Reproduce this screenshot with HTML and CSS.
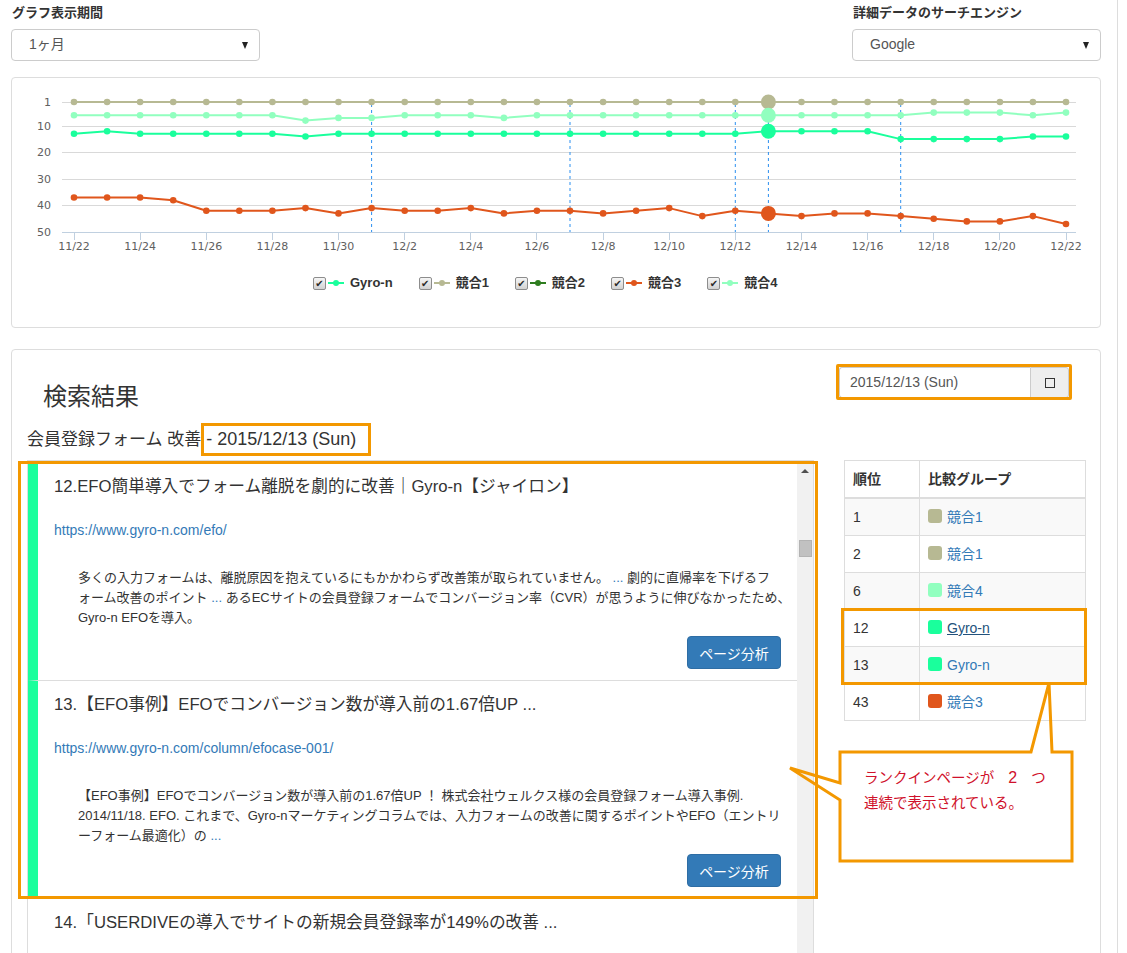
FILE: index.html
```html
<!DOCTYPE html>
<html lang="ja">
<head>
<meta charset="utf-8">
<title>検索結果</title>
<link rel="stylesheet" href="styles.css">
</head>
<body>
<div class="page">
  <div class="filters">
    <div class="field">
      <div class="field-label">グラフ表示期間</div>
      <div class="select"><span>1ヶ月</span><i class="caret"></i></div>
    </div>
    <div class="field">
      <div class="field-label">詳細データのサーチエンジン</div>
      <div class="select"><span>Google</span><i class="caret"></i></div>
    </div>
  </div>

  <section class="panel chart-panel">
    <svg class="chart" width="1088" height="187" viewBox="12 78 1088 187">
      <defs>
        <marker id="dot-gyro" viewBox="0 0 8 8" refX="4" refY="4" markerWidth="8" markerHeight="8" markerUnits="userSpaceOnUse"><circle cx="4" cy="4" r="3.3" class="f-gyro"/></marker>
        <marker id="dot-k1" viewBox="0 0 8 8" refX="4" refY="4" markerWidth="8" markerHeight="8" markerUnits="userSpaceOnUse"><circle cx="4" cy="4" r="3.3" class="f-k1"/></marker>
        <marker id="dot-k3" viewBox="0 0 8 8" refX="4" refY="4" markerWidth="8" markerHeight="8" markerUnits="userSpaceOnUse"><circle cx="4" cy="4" r="3.3" class="f-k3"/></marker>
        <marker id="dot-k4" viewBox="0 0 8 8" refX="4" refY="4" markerWidth="8" markerHeight="8" markerUnits="userSpaceOnUse"><circle cx="4" cy="4" r="3.3" class="f-k4"/></marker>
      </defs>
      <g class="grid">
        <line x1="62" x2="1076" y1="102.5" y2="102.5"/>
        <line x1="62" x2="1076" y1="126.5" y2="126.5"/>
        <line x1="62" x2="1076" y1="152.5" y2="152.5"/>
        <line x1="62" x2="1076" y1="179.5" y2="179.5"/>
        <line x1="62" x2="1076" y1="205.5" y2="205.5"/>
      </g>
      <line class="axis" x1="62" x2="1076" y1="232.5" y2="232.5"/>
      <g class="axis">
        <line x1="74.5" x2="74.5" y1="232" y2="240"/>
        <line x1="140.5" x2="140.5" y1="232" y2="240"/>
        <line x1="206.5" x2="206.5" y1="232" y2="240"/>
        <line x1="272.5" x2="272.5" y1="232" y2="240"/>
        <line x1="338.5" x2="338.5" y1="232" y2="240"/>
        <line x1="404.5" x2="404.5" y1="232" y2="240"/>
        <line x1="470.5" x2="470.5" y1="232" y2="240"/>
        <line x1="536.5" x2="536.5" y1="232" y2="240"/>
        <line x1="603.5" x2="603.5" y1="232" y2="240"/>
        <line x1="669.5" x2="669.5" y1="232" y2="240"/>
        <line x1="735.5" x2="735.5" y1="232" y2="240"/>
        <line x1="801.5" x2="801.5" y1="232" y2="240"/>
        <line x1="867.5" x2="867.5" y1="232" y2="240"/>
        <line x1="933.5" x2="933.5" y1="232" y2="240"/>
        <line x1="999.5" x2="999.5" y1="232" y2="240"/>
        <line x1="1066.5" x2="1066.5" y1="232" y2="240"/>
      </g>
      <g class="ylabels">
        <text x="51" y="106">1</text>
        <text x="51" y="130">10</text>
        <text x="51" y="156">20</text>
        <text x="51" y="183">30</text>
        <text x="51" y="209">40</text>
        <text x="51" y="236">50</text>
      </g>
      <g class="xlabels">
        <text x="74" y="250">11/22</text>
        <text x="140.1" y="250">11/24</text>
        <text x="206.3" y="250">11/26</text>
        <text x="272.4" y="250">11/28</text>
        <text x="338.5" y="250">11/30</text>
        <text x="404.7" y="250">12/2</text>
        <text x="470.8" y="250">12/4</text>
        <text x="536.9" y="250">12/6</text>
        <text x="603.1" y="250">12/8</text>
        <text x="669.2" y="250">12/10</text>
        <text x="735.3" y="250">12/12</text>
        <text x="801.5" y="250">12/14</text>
        <text x="867.6" y="250">12/16</text>
        <text x="933.7" y="250">12/18</text>
        <text x="999.9" y="250">12/20</text>
        <text x="1066" y="250">12/22</text>
      </g>
      <g class="plotline">
        <line x1="371.6" x2="371.6" y1="104" y2="232"/>
        <line x1="570" x2="570" y1="104" y2="232"/>
        <line x1="735.3" x2="735.3" y1="104" y2="232"/>
        <line x1="768.4" x2="768.4" y1="104" y2="232"/>
        <line x1="900.7" x2="900.7" y1="104" y2="232"/>
      </g>
      <polyline class="series s-k1" points="74,102 107.1,102 140.1,102 173.2,102 206.3,102 239.3,102 272.4,102 305.5,102 338.5,102 371.6,102 404.7,102 437.7,102 470.8,102 503.9,102 536.9,102 570,102 603.1,102 636.1,102 669.2,102 702.3,102 735.3,102 768.4,102 801.5,102 834.5,102 867.6,102 900.7,102 933.7,102 966.8,102 999.9,102 1032.9,102 1066,102"/>
      <polyline class="series s-k4" points="74,115.3 107.1,115.3 140.1,115.3 173.2,115.3 206.3,115.3 239.3,115.3 272.4,115.3 305.5,120.6 338.5,117.9 371.6,117.9 404.7,115.3 437.7,115.3 470.8,115.3 503.9,117.9 536.9,115.3 570,115.3 603.1,115.3 636.1,115.3 669.2,115.3 702.3,115.3 735.3,115.3 768.4,115.3 801.5,115.3 834.5,115.3 867.6,115.3 900.7,115.3 933.7,112.6 966.8,112.6 999.9,112.6 1032.9,115.3 1066,112.6"/>
      <polyline class="series s-gyro" points="74,133.8 107.1,131.2 140.1,133.8 173.2,133.8 206.3,133.8 239.3,133.8 272.4,133.8 305.5,136.5 338.5,133.8 371.6,133.8 404.7,133.8 437.7,133.8 470.8,133.8 503.9,133.8 536.9,133.8 570,133.8 603.1,133.8 636.1,133.8 669.2,133.8 702.3,133.8 735.3,133.8 768.4,131.2 801.5,131.2 834.5,131.2 867.6,131.2 900.7,139.1 933.7,139.1 966.8,139.1 999.9,139.1 1032.9,136.5 1066,136.5"/>
      <polyline class="series s-k3" points="74,197.5 107.1,197.5 140.1,197.5 173.2,200.2 206.3,210.8 239.3,210.8 272.4,210.8 305.5,208.1 338.5,213.4 371.6,208.1 404.7,210.8 437.7,210.8 470.8,208.1 503.9,213.4 536.9,210.8 570,210.8 603.1,213.4 636.1,210.8 669.2,208.1 702.3,216.1 735.3,210.8 768.4,213.4 801.5,216.1 834.5,213.4 867.6,213.4 900.7,216.1 933.7,218.7 966.8,221.4 999.9,221.4 1032.9,216.1 1066,224"/>
      <circle class="f-k1" cx="768.4" cy="102" r="7.5"/>
      <circle class="f-k4" cx="768.4" cy="115.3" r="7.5"/>
      <circle class="f-gyro" cx="768.4" cy="131.2" r="7.5"/>
      <circle class="f-k3" cx="768.4" cy="213.4" r="7.5"/>
    </svg>
    <div class="legend">
      <span class="legend-item"><span class="cb">✔</span><svg class="lg-mark" width="16" height="8" viewBox="0 0 16 8"><line class="s-gyro-l" x1="0" y1="4" x2="16" y2="4"/><circle class="f-gyro" cx="8" cy="4" r="3"/></svg><span class="lg-text">Gyro-n</span></span>
      <span class="legend-item"><span class="cb">✔</span><svg class="lg-mark" width="16" height="8" viewBox="0 0 16 8"><line class="s-k1-l" x1="0" y1="4" x2="16" y2="4"/><circle class="f-k1" cx="8" cy="4" r="3"/></svg><span class="lg-text">競合1</span></span>
      <span class="legend-item"><span class="cb">✔</span><svg class="lg-mark" width="16" height="8" viewBox="0 0 16 8"><line class="s-k2-l" x1="0" y1="4" x2="16" y2="4"/><circle class="f-k2" cx="8" cy="4" r="3"/></svg><span class="lg-text">競合2</span></span>
      <span class="legend-item"><span class="cb">✔</span><svg class="lg-mark" width="16" height="8" viewBox="0 0 16 8"><line class="s-k3-l" x1="0" y1="4" x2="16" y2="4"/><circle class="f-k3" cx="8" cy="4" r="3"/></svg><span class="lg-text">競合3</span></span>
      <span class="legend-item"><span class="cb">✔</span><svg class="lg-mark" width="16" height="8" viewBox="0 0 16 8"><line class="s-k4-l" x1="0" y1="4" x2="16" y2="4"/><circle class="f-k4" cx="8" cy="4" r="3"/></svg><span class="lg-text">競合4</span></span>
    </div>
  </section>

  <section class="panel results-panel">
    <div class="results-main">
      <h3 class="results-title">検索結果</h3>
      <p class="query">会員登録フォーム 改善<span class="query-date">- 2015/12/13 (Sun)</span></p>
      <div class="result-list">
        <div class="result-items">
          <div class="result own">
            <h4 class="result-title">12.EFO簡単導入でフォーム離脱を劇的に改善<span class="bar">｜</span>Gyro-n【ジャイロン】</h4>
            <a class="result-url">https://www.gyro-n.com/efo/</a>
            <p class="result-desc">多くの入力フォームは、離脱原因を抱えているにもかかわらず改善策が取られていません。 <span class="more">...</span> 劇的に直帰率を下げるフ<br>ォーム改善のポイント <span class="more">...</span> あるECサイトの会員登録フォームでコンバージョン率（CVR）が思うように伸びなかったため、<br>Gyro-n EFOを導入。</p>
            <div class="result-actions"><button class="btn">ページ分析</button></div>
          </div>
          <div class="result own">
            <h4 class="result-title">13.【EFO事例】EFOでコンバージョン数が導入前の1.67倍UP ...</h4>
            <a class="result-url">https://www.gyro-n.com/column/efocase-001/</a>
            <p class="result-desc">【EFO事例】EFOでコンバージョン数が導入前の1.67倍UP ！ 株式会社ウェルクス様の会員登録フォーム導入事例.<br>2014/11/18. EFO. これまで、Gyro-nマーケティングコラムでは、入力フォームの改善に関するポイントやEFO（エントリ<br>ーフォーム最適化）の <span class="more">...</span></p>
            <div class="result-actions"><button class="btn">ページ分析</button></div>
          </div>
          <div class="result rest">
            <h4 class="result-title">14.「USERDIVEの導入でサイトの新規会員登録率が149%の改善 ...</h4>
          </div>
        </div>
        <div class="fake-scroll"><i class="arrow-up"></i><i class="thumb"></i></div>
      </div>
    </div>
    <aside class="results-side">
      <div class="date-group"><span class="date-input">2015/12/13 (Sun)</span><span class="date-btn"><i class="cal-box"></i></span></div>
      <table class="rank-table">
        <thead><tr><th class="c-rank">順位</th><th>比較グループ</th></tr></thead>
        <tbody>
          <tr><td>1</td><td><span class="sw sw-k1"></span><a class="grp">競合1</a></td></tr>
          <tr><td>2</td><td><span class="sw sw-k1"></span><a class="grp">競合1</a></td></tr>
          <tr><td>6</td><td><span class="sw sw-k4"></span><a class="grp">競合4</a></td></tr>
          <tr><td>12</td><td><span class="sw sw-gyro"></span><a class="grp hover">Gyro-n</a></td></tr>
          <tr><td>13</td><td><span class="sw sw-gyro"></span><a class="grp">Gyro-n</a></td></tr>
          <tr><td>43</td><td><span class="sw sw-k3"></span><a class="grp">競合3</a></td></tr>
        </tbody>
      </table>
    </aside>
  </section>

  <div class="annot annot-date"></div>
  <div class="annot annot-list"></div>
  <div class="annot annot-rows"></div>
  <div class="callout">
    <svg class="callout-shape" width="300" height="195" viewBox="780 675 300 195"><path d="M1049,683 L1031,752 H840 V783 L790,768 L840,800 V861 H1072 V752 H1052 Z"/></svg>
    <p class="callout-text">ランクインページが<span class="num">2</span>つ<br>連続で表示されている。</p>
  </div>
</div>
</body>
</html>
```
FILE: styles.css
```css
* { box-sizing: border-box; }
html, body { margin: 0; height: 953px; overflow: hidden; background: #fff; }
body {
  font-family: "Liberation Sans", "Noto Sans CJK JP", sans-serif;
  font-size: 14px;
  line-height: 1.42857;
  color: #333;
}
.page {
  position: relative;
  width: 1118px;
  min-height: 953px;
  padding: 4px 16px 0 11px;
  border-right: 1px solid #ddd;
}

/* filters */
.filters { display: flex; justify-content: space-between; }
.field { width: 249px; }
.field-label { font-size: 13px; font-weight: bold; line-height: 18px; margin: 0 0 7px 1px; color: #333; }
.select {
  height: 32px;
  border: 1px solid #ccc;
  border-radius: 4px;
  display: flex;
  align-items: center;
  justify-content: space-between;
  padding: 0 11px 0 17px;
  font-size: 14px;
  color: #555;
}
.caret {
  width: 0; height: 0;
  border-left: 3.5px solid transparent;
  border-right: 3.5px solid transparent;
  border-top: 7px solid #222;
}

/* panels */
.panel { border: 1px solid #ddd; border-radius: 4px; background: #fff; }
.chart-panel { margin-top: 16px; height: 251px; }
.chart { display: block; }
.grid line { stroke: #d9d9d9; stroke-width: 1; }
.axis, .axis line { stroke: #c0d0e0; stroke-width: 1; }
.ylabels text { font-family: "DejaVu Sans", sans-serif; font-size: 11px; fill: #606060; text-anchor: end; }
.xlabels text { font-family: "DejaVu Sans", sans-serif; font-size: 11px; fill: #606060; text-anchor: middle; }
.plotline line { stroke: #2b8ff0; stroke-width: 1; stroke-dasharray: 3 3; }
.series { fill: none; stroke-width: 2; stroke-linejoin: round; }
.s-gyro { stroke: #1aff9c; marker-start: url(#dot-gyro); marker-mid: url(#dot-gyro); marker-end: url(#dot-gyro); }
.s-k1 { stroke: #b7b993; marker-start: url(#dot-k1); marker-mid: url(#dot-k1); marker-end: url(#dot-k1); }
.s-k3 { stroke: #e0561c; marker-start: url(#dot-k3); marker-mid: url(#dot-k3); marker-end: url(#dot-k3); }
.s-k4 { stroke: #91ffbf; marker-start: url(#dot-k4); marker-mid: url(#dot-k4); marker-end: url(#dot-k4); }
.f-gyro { fill: #1aff9c; }
.f-k1 { fill: #b7b993; }
.f-k2 { fill: #2e7d1f; }
.f-k3 { fill: #e0561c; }
.f-k4 { fill: #91ffbf; }
.s-gyro-l { stroke: #1aff9c; stroke-width: 2; }
.s-k1-l { stroke: #b7b993; stroke-width: 2; }
.s-k2-l { stroke: #2e7d1f; stroke-width: 2; }
.s-k3-l { stroke: #e0561c; stroke-width: 2; }
.s-k4-l { stroke: #91ffbf; stroke-width: 2; }

.legend { display: flex; align-items: center; height: 16px; margin-top: 10px; padding-left: 301px; }
.legend-item { display: flex; align-items: center; margin-right: 26px; }
.cb {
  width: 13px; height: 13px;
  border: 1px solid #8d8d8d;
  border-radius: 2px;
  background: linear-gradient(#f6f6f6, #d2d2d2);
  font-family: "DejaVu Sans", sans-serif;
  font-size: 10px;
  line-height: 11px;
  text-align: center;
  color: #2a2a2a;
  margin-right: 2px;
}
.lg-mark { display: block; margin-right: 6px; }
.lg-text { font-size: 13px; font-weight: bold; color: #333; line-height: 16px; }

/* results */
.results-panel {
  margin-top: 21px;
  height: 700px;
  display: grid;
  grid-template-columns: 787px 250px;
  column-gap: 22px;
  align-items: start;
  padding: 0 14px 0 15px;
}
.results-title { margin: 32px 0 0 16px; font-size: 24px; line-height: 30px; font-weight: normal; color: #333; }
.query { margin: 11px 0 0; font-size: 17px; line-height: 33px; height: 33px; white-space: nowrap; }
.query-date {
  display: inline-block;
  vertical-align: top;
  border: 3px solid #f39800;
  padding: 0 12px 0 2px;
  line-height: 27px;
  font-size: 18px;
}
.result-list {
  margin-top: 4px;
  height: 520px;
  border: 1px solid #ddd;
  display: flex;
  overflow: hidden;
}
.result-items { flex: 1; min-width: 0; }
.result {
  border-left: 10px solid transparent;
  border-bottom: 1px solid #ddd;
  padding: 13px 16px 11px 16px;
}
.result.own { border-left-color: #1aff9c; }
.result.rest { min-height: 160px; }
.result-title { margin: 0; font-size: 16.7px; line-height: 22px; font-weight: normal; color: #333; white-space: nowrap; }
.bar { font-family: "Noto Sans CJK JP", sans-serif; color: #333; font-weight: bold; }
.result-url { display: block; margin-top: 22px; font-size: 14px; line-height: 20px; color: #337ab7; text-decoration: none; }
.result-desc { margin: 28px 0 0; padding-left: 24px; font-size: 13px; line-height: 20px; white-space: nowrap; color: #333; }
.more { color: #337ab7; }
.result-actions { margin-top: 8px; display: flex; justify-content: flex-end; }
.btn {
  width: 94px; height: 33px;
  background: #337ab7;
  border: 1px solid #2e6da4;
  border-radius: 4px;
  color: #fff;
  font-family: inherit;
  font-size: 14px;
  padding: 0;
}
.fake-scroll {
  width: 16px;
  background: #f1f1f1;
  display: flex;
  flex-direction: column;
  align-items: center;
}
.arrow-up {
  margin-top: 8px;
  width: 0; height: 0;
  border-left: 4px solid transparent;
  border-right: 4px solid transparent;
  border-bottom: 4px solid #505050;
}
.thumb {
  margin-top: 67px;
  width: 13px; height: 17px;
  background: #c1c1c1;
  border: 1px solid #b3b3b3;
}

.results-side { display: block; }
.date-group { margin: 17px 0 0 3px; width: 230px; height: 31px; display: flex; }
.date-input {
  flex: 1;
  border: 1px solid #ccc;
  border-right: none;
  border-radius: 3px 0 0 3px;
  padding: 0 10px;
  font-size: 14px;
  line-height: 29px;
  color: #555;
}
.date-btn {
  width: 39px;
  background: #eee;
  border: 1px solid #ccc;
  border-radius: 0 3px 3px 0;
  display: flex;
  align-items: center;
  justify-content: center;
}
.cal-box { width: 10px; height: 10px; border: 1px solid #333; }

.rank-table {
  margin: 62px 0 0 8px;
  width: 242px;
  border-collapse: collapse;
  font-size: 14px;
  line-height: 20px;
}
.rank-table th, .rank-table td { border: 1px solid #ddd; padding: 8px; text-align: left; }
.rank-table th { font-weight: bold; border-bottom-width: 2px; }
.rank-table .c-rank { width: 75px; }
.rank-table tbody tr:nth-child(odd) { background: #f9f9f9; }
.sw { display: inline-block; width: 14px; height: 14px; border-radius: 3px; margin-right: 5px; vertical-align: -1px; }
.sw-k1 { background: #b7b993; }
.sw-k3 { background: #e0561c; }
.sw-k4 { background: #91ffbf; }
.sw-gyro { background: #1aff9c; }
.grp { color: #337ab7; text-decoration: none; }
.grp.hover { color: #23527c; text-decoration: underline; }

/* annotations */
.annot { position: absolute; border: 3px solid #f39800; pointer-events: none; }
.annot-date { left: 836px; top: 364px; width: 236px; height: 36px; border-radius: 2px; }
.annot-list { left: 18px; top: 461px; width: 800px; height: 438px; }
.annot-rows { left: 841px; top: 608px; width: 246px; height: 77px; }
.callout { position: absolute; left: 780px; top: 675px; width: 300px; height: 195px; pointer-events: none; }
.callout-shape { display: block; }
.callout-shape path { fill: none; stroke: #f39800; stroke-width: 3; stroke-linejoin: miter; }
.callout-text {
  position: absolute;
  left: 84px;
  top: 90px;
  margin: 0;
  font-size: 14.5px;
  line-height: 25px;
  color: #d0112b;
  white-space: nowrap;
}
.num { font-size: 16px; margin: 0 14px; }
```
